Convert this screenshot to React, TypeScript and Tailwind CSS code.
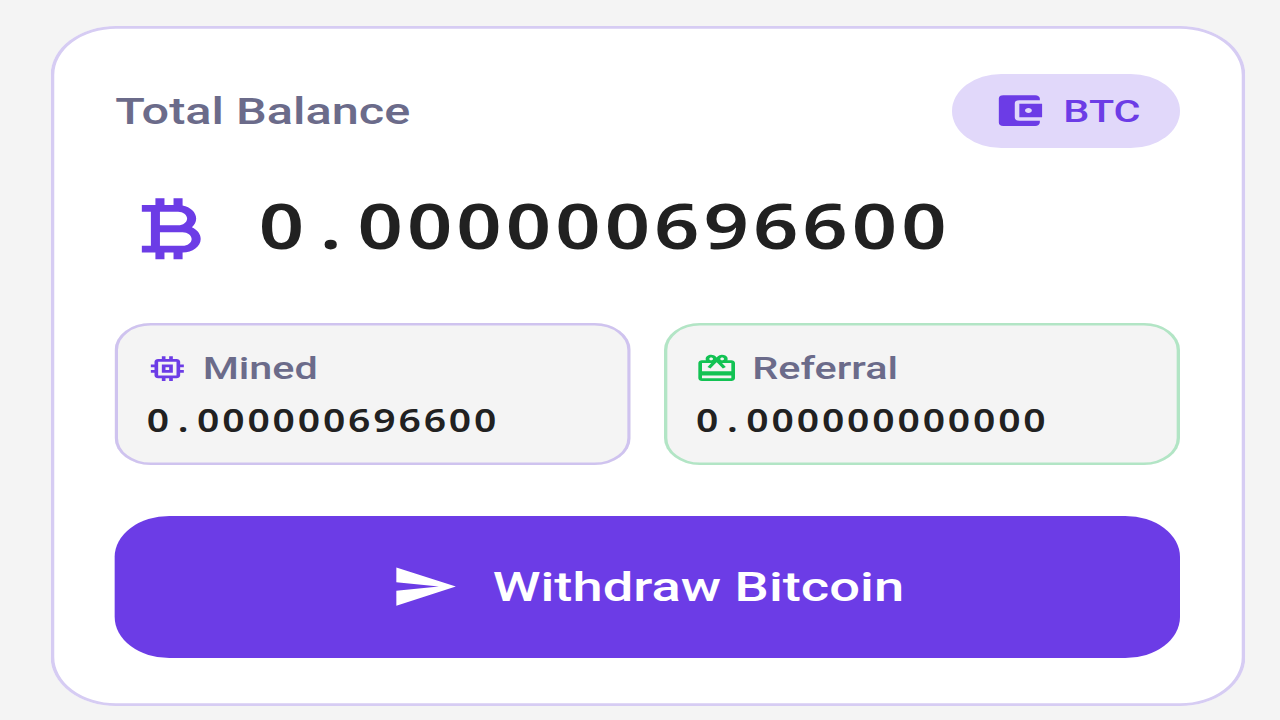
import React, { memo } from 'react'
import { clsx } from 'clsx'
import type { IconType } from 'react-icons'
import {
  MdAccountBalanceWallet,
  MdCardGiftcard,
  MdCurrencyBitcoin,
  MdMemory,
  MdSend,
} from 'react-icons/md'

interface AmountProps {
  value: string
  className: string
  pointClassName: string
}

// digits share one advance width, only the point needs its own cell
const Amount = memo<AmountProps>(({ value, className, pointClassName }) => {
  const [whole, fraction] = value.split('.')

  return (
    <div
      className={clsx(
        "flex origin-left scale-x-[0.93] whitespace-nowrap font-['Noto_Sans',sans-serif] font-semibold text-[#212121]",
        className
      )}
    >
      <span>{whole}</span>
      <span className={clsx('tracking-normal', pointClassName)}>.</span>
      <span>{fraction}</span>
    </div>
  )
})

interface StatCardProps {
  icon: IconType
  label: string
  value: string
  borderClassName: string
  iconClassName: string
}

const StatCard = memo<StatCardProps>(({ icon: Icon, label, value, borderClassName, iconClassName }) => (
  <div className={clsx('h-[142px] rounded-[27px] bg-[#f4f4f4] pl-[23px] pt-[27.5px]', borderClassName)}>
    <div className="flex h-[36px] items-center gap-[10px]">
      <Icon className={clsx('size-[33px] shrink-0', iconClassName)} />
      <span className="pt-[1px] text-[31px] font-medium leading-none text-[#6b6b8a]">{label}</span>
    </div>
    <Amount
      value={value}
      className="ml-[0.6px] mt-[14px] h-[40px] text-[31.5px] leading-[40px] tracking-[2.29px]"
      pointClassName="w-[20.31px] pl-[4.7px]"
    />
  </div>
))

export default function App() {
  return (
    <div className="h-[720px] w-[1280px] overflow-hidden bg-[#f4f4f4]">
      <div className="h-[720px] w-[960px] origin-top-left scale-x-[1.33333] pl-[38px] pt-[26px] font-['Roboto',sans-serif]">
        <div className="h-[680px] w-[895.5px] rounded-[49px] bg-white pl-[48px] pr-[48.3px] pt-[48px] shadow-[inset_0_0_0_2.7px_#d6ccf3]">
          <div className="flex h-[73.5px] items-center justify-between">
            <span className="pl-[0.4px] pt-[2px] text-[36.5px] font-medium leading-none text-[#6b6b8a]">
              Total Balance
            </span>
            <div className="flex h-full w-[171.7px] items-center gap-[13px] rounded-full bg-[#e1d8fa] pl-[30px] text-[#6c3ce6]">
              <MdAccountBalanceWallet className="size-[41px] shrink-0" />
              <span className="pt-[1px] text-[31px] font-medium leading-none">BTC</span>
            </div>
          </div>

          <div className="mt-[40.5px] flex h-[81.5px] items-center">
            <MdCurrencyBitcoin className="size-[81.5px] shrink-0 text-[#6c3ce6]" />
            <Amount
              value="0.000000696600"
              className="ml-[26.4px] h-[80px] text-[64px] leading-[72px] tracking-[3.25px]"
              pointClassName="w-[39.86px] pl-[9.5px]"
            />
          </div>

          <div className="mt-[53px] grid grid-cols-2 gap-[25.3px]">
            <StatCard
              icon={MdMemory}
              label="Mined"
              value="0.000000696600"
              borderClassName="shadow-[inset_0_0_0_2.5px_#cfc3ef]"
              iconClassName="text-[#6c3ce6]"
            />
            <StatCard
              icon={MdCardGiftcard}
              label="Referral"
              value="0.000000000000"
              borderClassName="shadow-[inset_0_0_0_2.5px_#b2e5c5]"
              iconClassName="text-[#12c253]"
            />
          </div>

          <button className="mt-[51px] flex h-[142px] w-full items-center rounded-[41px] bg-[#6c3ce6] pl-[207px] text-white">
            <MdSend className="size-[51px] shrink-0" />
            <span className="ml-[25.5px] whitespace-nowrap pt-[2px] text-[40.75px] font-medium leading-none">
              Withdraw Bitcoin
            </span>
          </button>
        </div>
      </div>
    </div>
  )
}
